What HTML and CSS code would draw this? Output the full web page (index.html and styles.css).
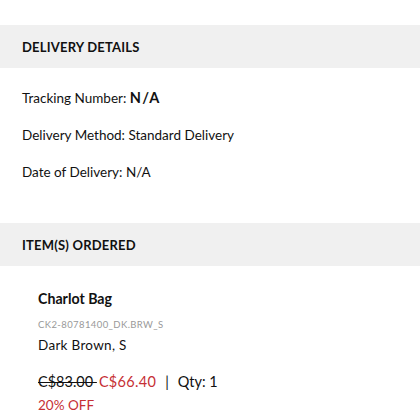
FILE: index.html
```html
<!DOCTYPE html>
<html>
<head>
<meta charset="utf-8">
<link rel="stylesheet" href="styles.css">
</head>
<body>
<div class="page">
  <div class="section-head">DELIVERY DETAILS</div>
  <div class="details">
    <div class="row">Tracking Number: <b class="strong">N/A</b></div>
    <div class="row">Delivery Method: Standard Delivery</div>
    <div class="row">Date of Delivery: N/A</div>
  </div>
  <div class="section-head">ITEM(S) ORDERED</div>
  <div class="item">
    <div class="item-name">Charlot Bag</div>
    <div class="sku">CK2-80781400_DK.BRW_S</div>
    <div class="variant">Dark Brown, S</div>
    <div class="price-line"><span class="old">C$83.00 </span><span class="sale">C$66.40</span><span class="sep">|</span><span>Qty: 1</span></div>
    <div class="discount">20% OFF</div>
  </div>
</div>
</body>
</html>
```
FILE: styles.css
```css
html, body { margin: 0; padding: 0; background: #fff; }
body { font-family: "Lato", "Liberation Sans", sans-serif; color: #111; }
.page { padding-top: 25px; }
.section-head {
  background: #f0f0f0;
  height: 43px;
  display: flex;
  align-items: center;
  padding-left: 22px;
  font-size: 13px;
  font-weight: 700;
  letter-spacing: 0.2px;
}
.details { padding: 20px 22px 41px; display: flex; flex-direction: column; gap: 17px; }
.row { font-size: 13.5px; line-height: 20px; }
.strong { font-weight: 700; letter-spacing: 1.2px; font-size: 14.5px; }
.item { padding: 22px 38px 0; }
.item-name { font-size: 14.2px; font-weight: 700; line-height: 22px; }
.sku { font-size: 9.5px; color: #999; margin-top: 9px; line-height: 12px; letter-spacing: 0.4px; }
.variant { font-size: 13.5px; line-height: 20px; margin-top: 4px; letter-spacing: 0.3px; }
.price-line { font-size: 14.5px; line-height: 20px; margin-top: 17px; display: flex; align-items: center; }
.old { text-decoration: line-through; white-space: pre; }
.sale { color: #c62f35; margin-left: 2px; letter-spacing: 0.3px; }
.sep { margin: 0 9px 0 9px; }
.discount { color: #c62f35; font-size: 13.5px; line-height: 20px; margin-top: 3px; }
```
